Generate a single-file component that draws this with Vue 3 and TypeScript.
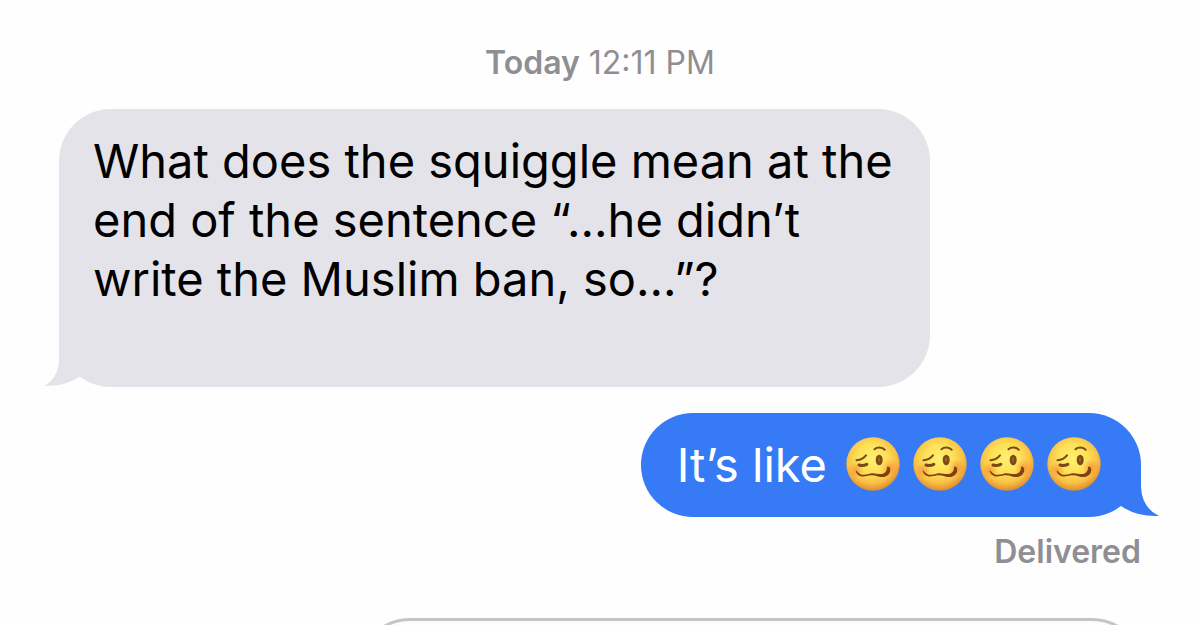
<script setup lang="ts">
const question = 'What does the squiggle mean at the end of the sentence “...he didn’t write the Muslim ban, so...”?'
const faces: number[] = [1, 2, 3, 4]
</script>

<template>
  <main class="chat">
    <p class="stamp"><strong>Today</strong> <time>12:11 PM</time></p>

    <section class="thread">
      <article class="bubble received">
        <p class="message">{{ question }}</p>
        <svg class="tail tail-left" viewBox="0 0 60 56" aria-hidden="true">
          <path d="M15 0V27Q15 47 0 55Q19 56 35 46L60 36V0Z" fill="#e4e3e9" />
        </svg>
      </article>

      <article class="bubble sent">
        <p class="message">It’s like</p>
        <span class="faces">
          <svg v-for="n in faces" :key="n" class="face" viewBox="0 0 54 54" role="img" aria-label="Woozy face">
            <defs>
              <radialGradient :id="`skin${n}`" cx="0.48" cy="0.4" r="0.6">
                <stop offset="0" stop-color="#ffef70" />
                <stop offset="0.45" stop-color="#fde158" />
                <stop offset="0.76" stop-color="#f9c146" />
                <stop offset="1" stop-color="#e08a2c" />
              </radialGradient>
              <radialGradient :id="`blush${n}`">
                <stop offset="0" stop-color="#f4702c" stop-opacity="0.5" />
                <stop offset="1" stop-color="#f4702c" stop-opacity="0" />
              </radialGradient>
            </defs>
            <circle cx="27" cy="27" r="26.7" :fill="`url(#skin${n})`" />
            <ellipse cx="10" cy="33" rx="8" ry="8" :fill="`url(#blush${n})`" />
            <ellipse cx="44" cy="31" rx="9" ry="9" :fill="`url(#blush${n})`" />
            <g fill="none" stroke="#7a4915" stroke-linecap="round" stroke-linejoin="round">
              <path d="M28.500 12.200C31 9.900 36 9.800 38.700 12.700" stroke-width="2" />
              <path d="M10.500 23.300Q16.500 22.800 20 18.400" stroke-width="2" />
              <path d="M13 28Q17 29.300 20.800 27.300" stroke-width="3" />
            </g>
            <ellipse cx="33.200" cy="23" rx="3.500" ry="5.300" fill="#7a4915" />
            <ellipse cx="33.100" cy="22.500" rx="1.200" ry="2.600" fill="#996329" />
            <path d="M9.700 34.200C9.500 33.600 10.300 33.500 10.700 34C14.500 39.200 19 38 23.500 36.700C29 35.200 33 38.500 37.500 36.400C40.400 35 41 32.500 41 30.700C41.300 29 43 29.500 43.700 30.700C45.600 34.700 42.300 39.300 38 40C33.500 40.700 29.500 37.500 24 38.300C18.300 39.700 12.500 41 9.700 34.200Z" fill="#80420f" />
          </svg>
        </span>
        <svg class="tail tail-right" viewBox="0 0 60 56" aria-hidden="true">
          <path d="M42 4V26Q43 47 60 55Q38 56 22 45L12 38V4Z" fill="#367af6" />
        </svg>
      </article>

      <p class="status">Delivered</p>
    </section>

    <form class="composer" @submit.prevent>
      <input class="entry" type="text" aria-label="Message" />
    </form>
  </main>
</template>

<style>
html,
body {
  margin: 0;
  background: #fefefe;
}
</style>

<style scoped>
.chat {
  box-sizing: border-box;
  height: 100vh;
  overflow: hidden;
  padding-top: 44px;
  background: #fefefe;
  color: #000;
  font-family: Inter, "Liberation Sans", sans-serif;
}

.stamp {
  margin: 0;
  color: #8e8e93;
  font-size: 32px;
  line-height: 38px;
  text-align: center;
}

.stamp strong {
  font-weight: 600;
}

.thread {
  display: flex;
  flex-direction: column;
  padding: 27px 59px 0;
}

.bubble {
  position: relative;
  box-sizing: border-box;
  border-radius: 52px;
}

.message {
  margin: 0;
  font-size: 47px;
  line-height: 59px;
}

.received {
  align-self: flex-start;
  max-width: 871px;
  padding: 22px 30px 79px 34px;
  background: #e4e3e9;
}

.sent {
  display: flex;
  align-items: center;
  align-self: flex-end;
  gap: 19px;
  margin-top: 26px;
  padding: 22px 40px 23px 36px;
  background: #367af6;
  color: #fff;
}

.faces {
  display: flex;
  gap: 13px;
  padding-bottom: 2px;
}

.face {
  display: block;
  width: 54px;
  height: 54px;
}

.tail {
  position: absolute;
  bottom: 0;
  width: 60px;
  height: 56px;
}

.tail-left {
  left: -15px;
}

.tail-right {
  right: -18px;
}

.status {
  align-self: flex-end;
  margin: 16px 0 0;
  color: #8e8e93;
  font-size: 32px;
  font-weight: 600;
  line-height: 38px;
}

.composer {
  padding: 47px 56px 0 358px;
}

.entry {
  display: block;
  box-sizing: border-box;
  width: 100%;
  height: 104px;
  padding: 0 36px;
  border: 3px solid #c5c5c7;
  border-radius: 52px;
  outline: none;
  background: #fcfcfe;
  font: inherit;
  font-size: 47px;
}
</style>
